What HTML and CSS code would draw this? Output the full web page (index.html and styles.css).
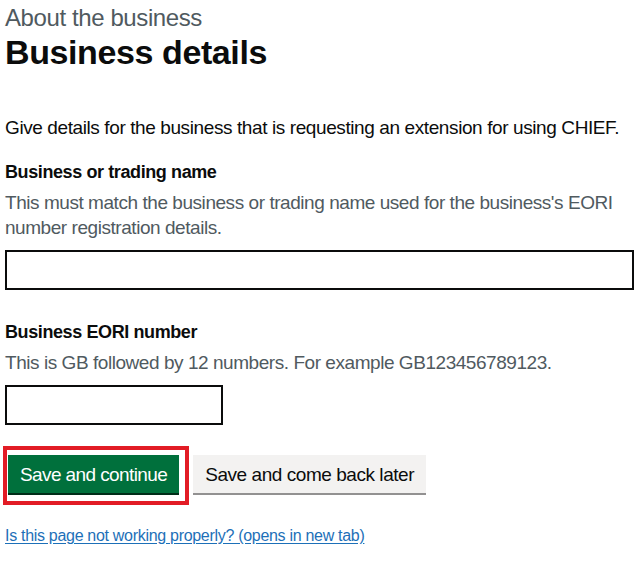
FILE: index.html
```html
<!DOCTYPE html>
<html lang="en">
  <head>
    <meta charset="UTF-8" />
    <meta name="viewport" content="width=device-width, initial-scale=1.0" />
    <title>Business details</title>
    <link rel="stylesheet" href="styles.css">
  </head>
  <body>
    <main class="page">
      <span class="caption">About the business</span>
      <h1 class="heading">Business details</h1>
      <p class="body-text">Give details for the business that is requesting an extension for using CHIEF.</p>

      <div class="form-group">
        <label class="label" for="business-name">Business or trading name</label>
        <div class="hint">This must match the business or trading name used for the business's EORI number registration details.</div>
        <input class="input" id="business-name" type="text" />
      </div>

      <div class="form-group form-group-last">
        <label class="label" for="eori">Business EORI number</label>
        <div class="hint">This is GB followed by 12 numbers. For example GB123456789123.</div>
        <input class="input input-short" id="eori" type="text" />
      </div>

      <div class="button-group">
        <div class="highlight">
          <button class="button">Save and continue</button>
        </div>
        <button class="button button-secondary">Save and come back later</button>
      </div>

      <a class="link" href="#">Is this page not working properly? (opens in new tab)</a>
    </main>
  </body>
</html>
```

FILE: styles.css
```css
body {
  margin: 0;
  background: #ffffff;
  color: #0b0c0c;
  font-family: "Liberation Sans", Arial, sans-serif;
}
.page {
  display: flex;
  flex-direction: column;
  align-items: flex-start;
  padding: 3px 6px 0 5px;
}
.caption {
  display: block;
  font-size: 24px;
  line-height: 30px;
  letter-spacing: -0.4px;
  color: #505a5f;
}
.heading {
  margin: 0 0 44px;
  font-size: 34px;
  line-height: 38px;
  font-weight: 700;
  letter-spacing: -0.4px;
}
.body-text {
  margin: 0 0 20px;
  font-size: 19px;
  line-height: 25px;
  letter-spacing: -0.4px;
}
.form-group {
  display: flex;
  flex-direction: column;
  align-self: stretch;
  margin-bottom: 30px;
}
.form-group-last {
  margin-bottom: 21px;
}
.label {
  margin-bottom: 5px;
  font-size: 18px;
  line-height: 25px;
  font-weight: 700;
  letter-spacing: -0.4px;
}
.hint {
  margin-bottom: 10px;
  font-size: 19px;
  line-height: 25px;
  letter-spacing: -0.45px;
  color: #505a5f;
}
.input {
  box-sizing: border-box;
  width: 100%;
  height: 40px;
  margin: 0;
  padding: 5px;
  border: 2px solid #0b0c0c;
  border-radius: 0;
  font: inherit;
  font-size: 19px;
}
.input-short {
  width: 218px;
}
.button-group {
  display: flex;
  align-items: flex-start;
  gap: 4px;
}
.highlight {
  margin-left: -2px;
  padding: 5px 6px 8px 1px;
  border: 4px solid #e21c25;
}
.button {
  box-sizing: border-box;
  height: 38px;
  margin: 0;
  padding: 8px 10px 7px;
  border: 2px solid transparent;
  border-radius: 0;
  background: #00703c;
  box-shadow: 0 2px 0 #002d18;
  color: #ffffff;
  font-family: inherit;
  font-size: 19px;
  line-height: 19px;
  letter-spacing: -0.6px;
  cursor: pointer;
}
.button-secondary {
  margin-top: 9px;
  background: #f3f2f1;
  box-shadow: 0 2px 0 #929191;
  color: #0b0c0c;
  letter-spacing: -0.45px;
}
.link {
  margin-top: 21px;
  font-size: 16px;
  line-height: 20px;
  letter-spacing: -0.3px;
  color: #1d70b8;
  text-decoration: underline;
  text-underline-offset: 2px;
}
```
